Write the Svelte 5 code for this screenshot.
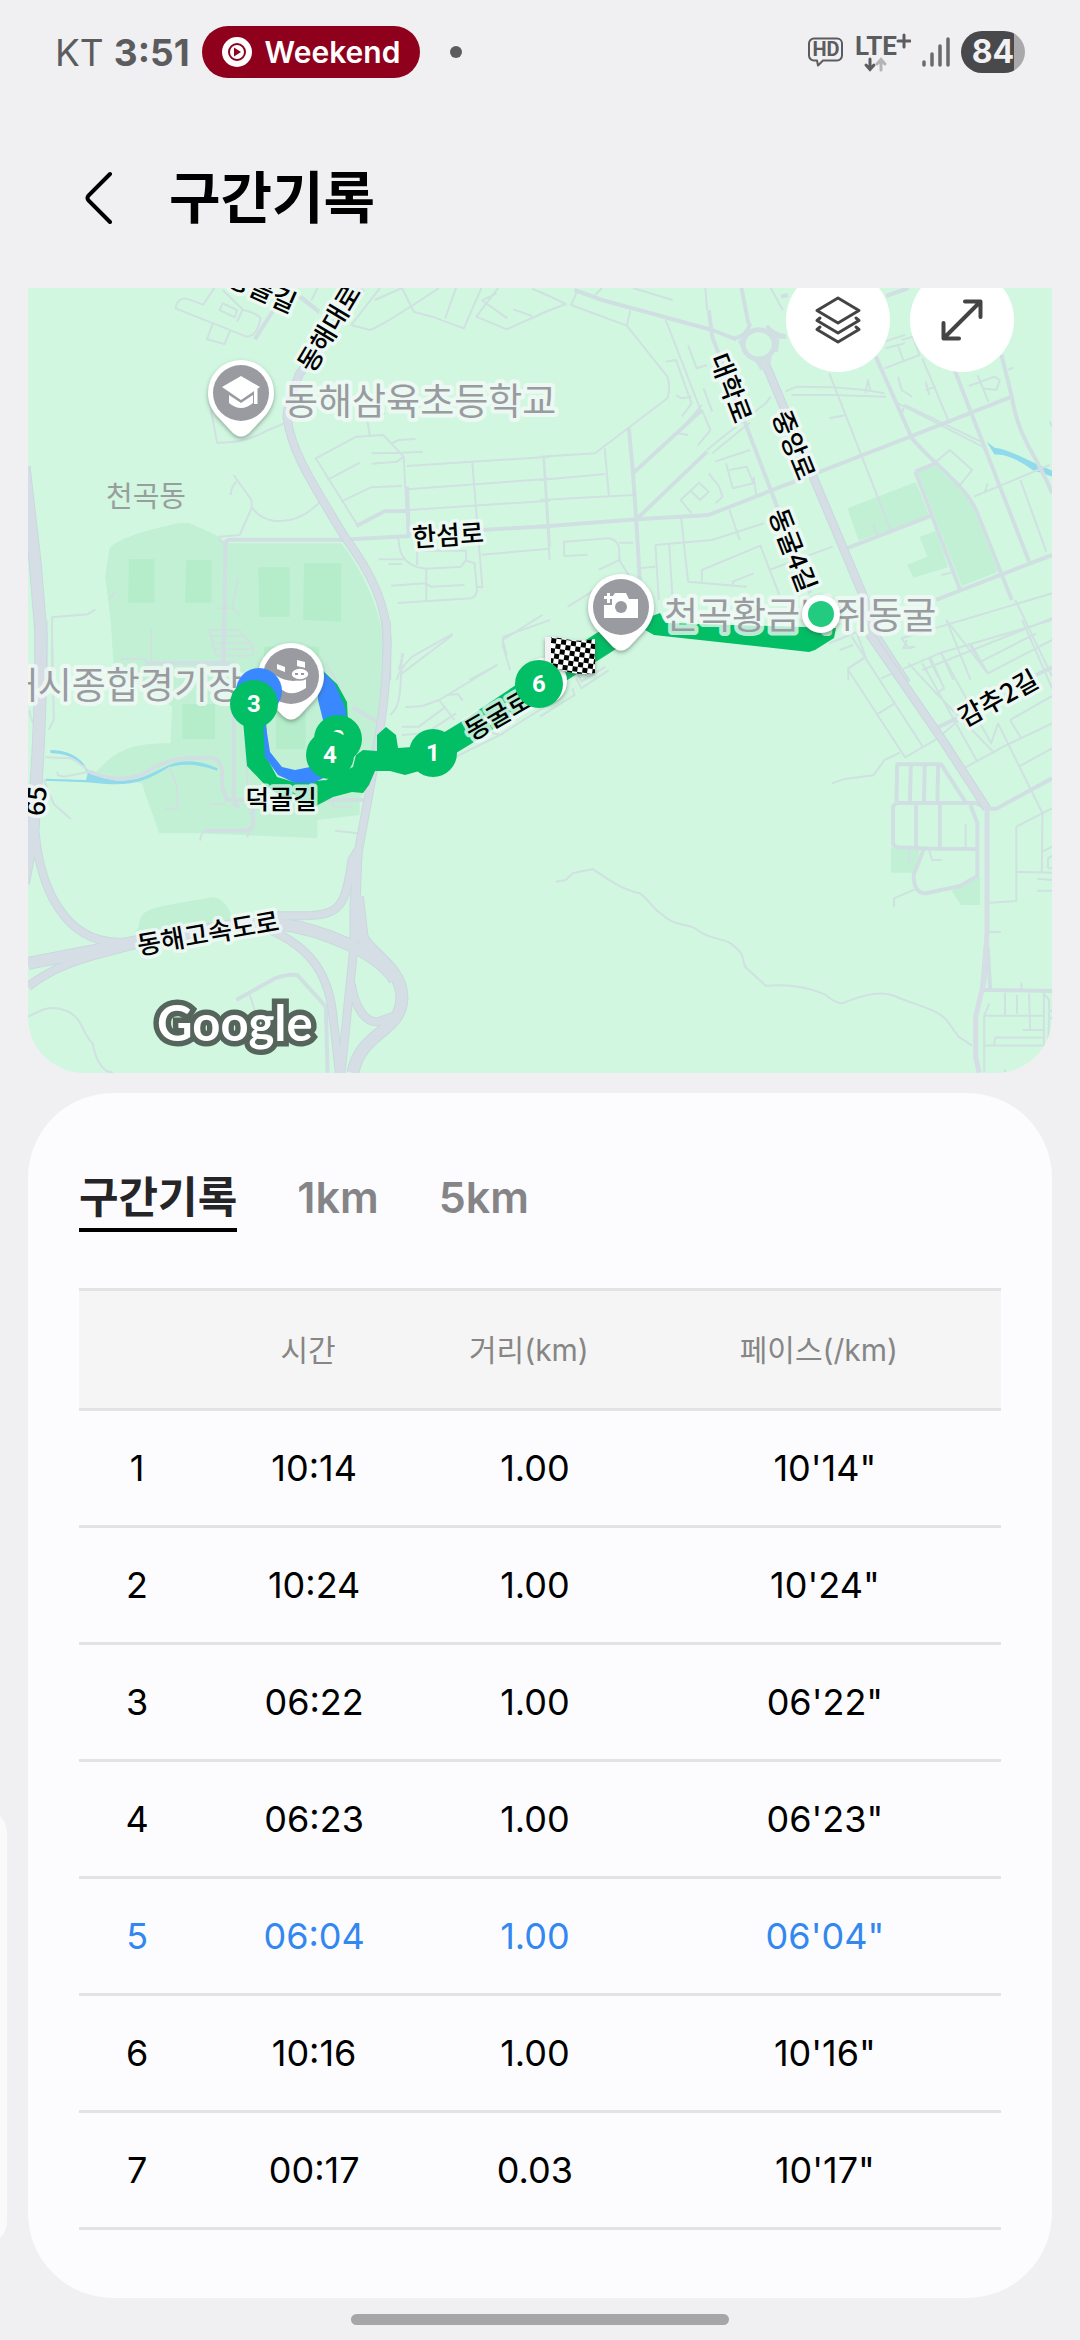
<script lang="ts">
  interface Split {
    no: number;
    time: string;
    distance: string;
    pace: string;
    best?: boolean;
  }

  const splits: Split[] = [
    { no: 1, time: "10:14", distance: "1.00", pace: "10'14\"" },
    { no: 2, time: "10:24", distance: "1.00", pace: "10'24\"" },
    { no: 3, time: "06:22", distance: "1.00", pace: "06'22\"" },
    { no: 4, time: "06:23", distance: "1.00", pace: "06'23\"" },
    { no: 5, time: "06:04", distance: "1.00", pace: "06'04\"", best: true },
    { no: 6, time: "10:16", distance: "1.00", pace: "10'16\"" },
    { no: 7, time: "00:17", distance: "0.03", pace: "10'17\"" },
  ];

  const tabs = ["구간기록", "1km", "5km"];
  let activeTab = $state("구간기록");

  // each tile keeps its own coordinates and is placed by a transform
  const tiles = [
    {
      place: "translate(20 280) scale(0.338 0.3333)",
      parks: [
        "M268 1020 252 890 265 805C290 770 420 740 470 729H500L580 765 612 790H950C985 830 1050 940 1070 1050L1075 1200H280Z",
      ],
      fields: ["M322 838H398V968H320Z", "M492 840H567V968H488Z", "M705 862H798V1010H708Z", "M840 850H950V1025L838 1020Z", "M722 1100H885V1200H722Z"],
      water: [],
      minor: [
        "M575 24 542 74 490 55Q465 55 460 85L670 170Q700 172 712 115 700 98 660 90L600 30",
        "M600 70 642 90 636 112 590 90ZM642 126 660 86M570 132 553 178 605 192 622 152",
        "M790 24 885 100M880 24 862 62M1065 24 980 135 1035 150Q1060 145 1240 24M1050 60 1130 24 1165 95 1225 112 1313 145 1365 24M1290 24 1258 115",
        "M1415 24 1350 110 1440 148 1568 90M1365 60 1442 115M1370 60 1410 40M1460 88 1515 108M1515 26 1568 50",
        "M565 390 583 488C650 488 690 475 735 450L782 430",
        "M632 585 685 660V685L650 765 590 770Q590 790 610 790M624 645Q622 625 640 605M685 680C720 740 820 740 888 665",
        "M1028 425 1035 465M1080 400 1060 408M910 600 1005 548M950 665 1038 622 1130 618",
        "M1000 738 875 535 995 470 1075 465 1135 530 1148 765M1040 520 1130 518 1192 515M1040 551 1115 545 1135 530M1100 490 1120 480 1170 477",
        "M1145 558 1568 530M1145 628 1568 596M1152 690 1568 662M1338 545 1368 922 1350 920M1550 530 1568 800M1365 824 1568 806",
        "M1120 775Q1120 860 1202 866L1305 860 1320 840V812H1175V855M1060 838H1135M1090 852H1130",
        "M1098 917 1200 910 1215 920 1315 915M1202 866V962M1117 969 1335 955Q1350 950 1352 930L1345 850 1320 842",
        "M645 895 628 980M580 985H630L653 1008M95 1190V1012L200 1003 223 988M262 960 282 935M388 1045V1150M298 1137H368L375 1145H600",
        "M560 1050H648L690 1100Q692 1125 680 1127H580ZM562 1068H665M568 1088H685M572 1108H692",
        "M1280 1062 1160 1130Q1120 1170 1115 1200M1135 1120 1120 1170M1412 1155 1330 1200M1546 1005 1428 1080 1440 1125",
      ],
      mid: [
        "M885 95 830 50M750 90 695 178",
        "M602 1200 608 790Q608 779 625 779H950L1155 768",
        "M995 738 1080 693 1145 692M1145 620 1150 768M1365 750 1568 738",
      ],
      major: [
        "M1010 24 825 285Q790 380 790 410C800 500 840 570 960 770 1040 880 1090 980 1085 1100V1200",
      ],
      highway: ["M12 560 45 850 62 1060V1200"],
    },
    {
      place: "translate(540 280) scale(0.3444 0.3333)",
      parks: [
        "M893 685 1090 607 1105 640 1130 708 925 782Z",
        "M1095 572 1145 555C1200 610 1240 640 1260 690L1330 875 1225 918 1180 800Z",
        "M1102 770 1150 752 1185 862 1085 893 1065 855 1125 830Z",
      ],
      fields: [],
      water: ["M1297 485 1320 503C1370 510 1410 540 1487 572V590L1430 570C1390 540 1350 520 1320 524Z"],
      minor: [
        "M0 35 75 72 0 102M110 30 90 75 252 137 370 290Q380 320 370 355L160 520 0 530M252 137 262 92M180 24 160 45M270 24 385 60",
        "M365 120 410 240 470 400M365 245 395 240 440 370 412 410M430 196 455 265 485 255M395 345 410 355 440 350M470 375 400 460 430 465M458 497 495 450 470 390M475 325 500 395",
        "M0 600 190 582M0 660 270 645M10 530 28 840M188 505 200 648M70 828 138 824M70 828V785L200 775Q228 780 230 810V840L260 890M230 788H270M170 870 235 838",
        "M485 510 520 480 655 370 670 350M500 520 600 435 610 428M508 545 610 510M540 550 560 625 620 610 600 560 550 570",
        "M408 660 462 608 490 635 465 660 435 630M408 660 440 700M490 580 520 620 530 650 510 670M620 590 628 645",
        "M410 715 430 905 600 920M335 795 500 780 650 730M335 795 345 960M375 790 385 960M285 865 335 860M470 905V870L640 797 695 945M560 915V905L620 880",
        "M550 690 580 780M665 870 850 800M840 280 1018 750M1050 180 1082 170 1102 225 1000 265M1003 205 1060 190M1040 200 1055 240",
        "M712 335 745 320 850 322 945 330 1000 340M730 345H850L1005 350M945 340 952 300 960 335M1040 290 1050 330 1080 350M840 415 890 405",
        "M1110 235 1185 420M1120 305 1130 345M1120 330 1150 320M1245 318 1320 290 1335 300 1325 330 1285 325M1270 285 1302 365M1360 270 1375 262",
        "M1040 370 1285 500M1050 400 1060 375 1290 490M1150 545 1190 510 1255 570 1220 615M1260 650 1480 555M1395 600 1470 815M1300 610 1290 640M1480 425 1487 440",
        "M1165 885 1195 878M970 730V740L980 765M80 980 160 930",
        "M840 1090 935 1050 920 1060 945 1130 895 1165V1200M870 1110 910 1095M1487 1015 1110 1170M1487 940 1050 1075 1070 1105 1090 1100M1180 1020 1250 1200M1245 1090 1300 1180M1380 960 1487 1190M1130 1135 1155 1190M1165 1120 1200 1200",
        "M105 1170 120 1205 190 1160M480 24 485 90M670 24 705 90M1000 185 1060 165",
      ],
      mid: [
        "M100 30 180 60 500 150 570 178M585 24 605 130M680 170H715M1005 48 1070 24M700 50 720 45",
        "M490 90 500 170 670 630 785 940",
        "M258 445 270 580 280 730 290 905M270 580 470 390M280 718 485 515",
        "M0 740 280 718 490 705 670 632 800 580 1075 470 1370 350",
        "M975 230 1080 475C1160 570 1240 620 1270 700L1370 960M1090 575 1148 550M1090 575 1220 930M1200 260 1420 845M1340 225 1370 350C1390 480 1440 520 1487 640",
        "M890 805 1135 708M1150 960 1487 825",
      ],
      major: ["M650 240 940 950 970 1060 1065 1210"],
      highway: [],
      ring: true,
    },
    {
      place: "translate(20 620) scale(0.338 0.3333)",
      parks: [
        "M270 180H1068L1072 300C1070 400 1045 460 1005 540V585L880 600V655L540 640H412L360 490 225 455C280 400 310 370 445 370L450 260 285 150Z",
        "M352 920C355 860 390 865 570 832 600 833 620 865 625 890L630 915 340 935Z",
      ],
      fields: ["M480 252H577V357H480Z", "M757 240H845V388H757Z", "M722 80H885V200H722Z"],
      water: [
        "M90 390C150 390 190 420 200 455 270 490 330 490 390 460L430 440C480 415 530 420 585 445L583 452C520 430 470 430 435 445 370 485 330 500 230 490L195 487 75 482 76 476 195 480 200 462C180 420 150 402 90 399Z",
      ],
      minor: [
        "M95 50 100 300 85 330M28 270Q30 310 60 330M75 412 150 415Q180 430 205 455L130 470 112 466 110 455M70 478 100 552 150 597",
        "M440 440Q465 490 466 520V565Q450 575 428 563M562 552H610M545 635Q535 640 533 662M660 190 675 560 690 600 672 652",
        "M905 130 945 200 960 240M925 535V560H980M932 632 1000 640M1130 100C1125 200 1130 260 1095 285",
        "M1130 160 1280 45M1130 320H1180L1260 260M1130 345 1200 340 1290 280M1140 262 1190 258 1240 240 1412 135M1240 240 1285 300M1265 225 1295 222 1310 242M1330 320 1420 345 1568 250M1290 410 1430 340",
        "M1568 0 1430 50 1428 75 1450 150M680 1125 697 1180M24 1190C60 1170 90 1155 130 1170 190 1190 180 1240 215 1270 225 1330 250 1358 275 1358",
      ],
      mid: [
        "M205 455C270 480 310 482 360 465 440 410 490 413 560 413 600 415 600 450 598 500L612 540H1020",
        "M602 0V130M632 240V540Q635 560 650 560M690 560V610Q690 632 660 632H545M372 130H640M985 262 1055 305",
        "M640 1140 755 1075Q790 1062 820 1065L905 1160 910 1358",
      ],
      major: [
        "M1083 0 1086 60C1085 250 1060 350 1040 480L1000 700 988 850V980L950 1358",
        "M1000 690 982 720C965 850 950 885 850 887H760M1000 700 995 830",
        "M45 640C60 800 130 965 290 967H340M24 1100C100 1040 160 1020 340 975",
        "M980 1090C990 1160 1020 1210 1060 1205L1100 1190M740 930C850 980 910 1050 925 1180L945 1358",
      ],
      highway: [
        "M62 0C62 250 55 400 45 520L38 640 10 790",
        "M24 1030 230 990 360 962 640 915 770 912C900 930 1060 1000 1110 1080",
        "M998 830 1012 950C1030 1000 1128 1040 1130 1130 1130 1240 1010 1230 985 1358",
      ],
    },
    {
      place: "translate(540 620) scale(0.3444 0.3333)",
      parks: ["M1019 682H1105L1085 758H1019Z", "M1195 812 1278 770V855H1222Z"],
      fields: [],
      water: [],
      minor: [
        "M46 785 75 780 95 760 153 747C200 780 240 810 290 820 320 840 320 860 350 880 390 920 420 910 450 925 490 960 530 955 550 968 610 1010 580 1030 600 1045L655 1097C750 1090 800 1110 830 1125Q870 1160 890 1145C950 1120 1000 1115 1030 1128 1100 1160 1150 1165 1180 1200L1215 1250 1255 1277",
        "M848 490 880 478 968 466 1000 420 1045 398",
        "M1350 1118V1185M1385 1125V1182M1420 1120 1423 1230M1463 1118V1277M1290 1358V1185L1305 1150M1290 1187H1465M1402 1230H1465M1318 1277 1322 1253H1465M1290 1277H1475Q1480 1180 1478 1140L1463 1120M1480 1172H1487M1480 1195H1487M1350 1348V1358M1398 1088V1108",
        "M1305 848 1383 843V620L1487 565M1383 755 1487 758M1457 758 1459 580M1459 695 1487 680M1475 745V715L1487 708M1475 745H1487M1445 776 1487 780M1443 812H1487M1303 936H1338",
        "M1072 690V730M1130 690 1138 720H1166M1088 808 1028 835V862M1236 612V684",
        "M893 147 1060 412 1155 355 1250 270M893 147 945 112M905 50 1110 378M978 283 1030 250M990 175 1160 100 1487 0M1065 60 1055 85 1085 80",
        "M1070 130 1155 225 1320 400M1135 115 1173 205 1148 222M1110 130 1270 425M1230 445 1355 375 1487 310M1365 300 1487 228M1365 300 1397 355M1165 100 1310 370 1330 310 1459 580M1390 440 1487 385M1180 0 1300 160 1487 60M1280 125 1440 40M1250 70 1300 160M1400 0 1487 205M0 290 100 225 95 205M105 175 120 205 200 150",
      ],
      mid: [
        "M1035 545 1037 433H1165L1238 550M1077 433 1074 545M1117 433 1115 545M1156 433 1154 545M1092 550V685M1161 550V685",
        "M1035 549H1265L1300 566M1035 549 1025 560V672L1035 682 1165 687H1272M1113 690 1085 765Q1085 820 1120 820L1220 798 1270 768V610L1250 555",
        "M1300 566H1325L1487 475M1155 322 1210 295M1440 165 1487 142M1297 940 1283 1110H1310L1487 1113M1300 980 1307 1105",
      ],
      major: ["M955 40 1175 370 1298 566"],
      highway: [],
      trunk: "M1298 566V940L1290 1080 1265 1190V1310L1275 1358",
    },
  ];

  const roadLabels = [
    { text: "동골길", x: 262, y: 290, angle: 24 },
    { text: "동해대로", x: 329, y: 328, angle: -59 },
    { text: "한섬로", x: 448, y: 535, angle: -4 },
    { text: "대학로", x: 731, y: 388, angle: 69 },
    { text: "중앙로", x: 794, y: 445, angle: 68 },
    { text: "동굴4길", x: 793, y: 550, angle: 69 },
    { text: "감추2길", x: 998, y: 698, angle: -29 },
    { text: "동굴로", x: 498, y: 715, angle: -30 },
    { text: "덕골길", x: 281, y: 799, angle: 0 },
    { text: "동해고속도로", x: 208, y: 933, angle: -10 },
    { text: "65", x: 36, y: 801, angle: -85 },
  ];

  const kmMarkers = [
    { km: 1, x: 433, y: 753 },
    { km: 2, x: 338, y: 739 },
    { km: 4, x: 330, y: 755 },
    { km: 3, x: 254, y: 704 },
    { km: 6, x: 539, y: 684 },
  ];
</script>

<svelte:head>
  <title>구간기록</title>
</svelte:head>

<div class="screen">
  <div class="status-bar">
    <div class="status-left">
      <span class="carrier">KT</span>
      <span class="clock">3:51</span>
      <span class="now-playing">
        <svg width="30" height="30" viewBox="0 0 30 30" aria-hidden="true">
          <circle cx="15" cy="15" r="15" fill="#fff" />
          <circle cx="15" cy="15" r="8" fill="none" stroke="#8f001c" stroke-width="2" />
          <path d="M12 10.5v9l7-4.500z" fill="#8f001c" />
        </svg>
        Weekend
      </span>
      <span class="more-dot"></span>
    </div>
    <div class="status-right">
      <svg width="36" height="30" viewBox="0 0 36 30" aria-hidden="true">
        <path
          d="M6 1.500h23a5 5 0 0 1 5 5v12a5 5 0 0 1-5 5H15l-5 5-1-5H6a5 5 0 0 1-5-5v-12a5 5 0 0 1 5-5z"
          fill="none"
          stroke="#5c5c5e"
          stroke-width="2"
          stroke-linejoin="round"
        />
        <text class="hd" x="18" y="19">HD</text>
      </svg>
      <svg width="56" height="40" viewBox="0 0 56 40" aria-hidden="true">
        <text class="lte" x="0" y="23">LTE</text>
        <path d="M49 3v12M43 9h12" stroke="#5c5c5e" stroke-width="3" stroke-linecap="round" />
        <path d="M15 27v10m-4-4 4 4.500 4-4.500" fill="none" stroke="#5c5c5e" stroke-width="3" stroke-linecap="round" />
        <path d="M26 38V28m-4 4 4-4.500 4 4.500" fill="none" stroke="#b4b4b6" stroke-width="3" stroke-linecap="round" />
      </svg>
      <svg width="28" height="30" viewBox="0 0 28 30" aria-hidden="true">
        <path d="M2 25v3M10 17v11M18 9v19M26 2v26" stroke="#6b6b6d" stroke-width="3.500" stroke-linecap="round" />
      </svg>
      <span class="battery">84</span>
    </div>
  </div>

  <header class="app-bar">
    <button class="back-button" aria-label="뒤로">
      <svg width="28" height="54" viewBox="0 0 28 54" aria-hidden="true">
        <path
          d="M25 3 3.500 24.500q-2 2.500 0 5L25 51"
          fill="none"
          stroke="#000"
          stroke-width="4"
          stroke-linecap="round"
        />
      </svg>
    </button>
    <h1>구간기록</h1>
  </header>

  <main>
    <section class="map" aria-label="지도">
      <svg class="map-canvas" viewBox="28 288 1024 785" aria-hidden="true">
        <defs>
          <pattern id="checker" width="10" height="10" patternUnits="userSpaceOnUse" patternTransform="rotate(8)">
            <rect width="10" height="10" fill="#fff" />
            <path d="M0 0h5v5H0zM5 5h5v5H5z" fill="#000" />
          </pattern>
          <filter id="shadow" x="-30%" y="-30%" width="160%" height="160%">
            <feDropShadow dx="0" dy="2" stdDeviation="2" flood-color="#3c5046" flood-opacity="0.5" />
          </filter>
          <g id="pin" filter="url(#shadow)">
            <path
              d="M0-33A33 33 0 0 1 33 0C33 10 28 19 22 25L8 40Q0 47-8 40L-22 25C-28 19-33 10-33 0A33 33 0 0 1 0-33Z"
              fill="#fff"
            />
            <circle r="28" fill="#999ba0" />
          </g>
        </defs>

        {#each tiles as tile}
          <g transform={tile.place}>
            {#each tile.parks as d}<path class="park" {d} />{/each}
            {#each tile.fields as d}<path class="field" {d} />{/each}
          </g>
        {/each}

        {#each tiles as tile}
          <g transform={tile.place}>
            {#each tile.water as d}<path class="water" {d} />{/each}
            {#each tile.minor as d}<path class="road minor" {d} />{/each}
            {#each tile.mid as d}<path class="road mid" {d} />{/each}
            {#each tile.highway as d}<path class="road highway casing" {d} />{/each}
            {#each tile.major as d}<path class="road major casing" {d} />{/each}
            {#each tile.highway as d}<path class="road highway" {d} />{/each}
            {#each tile.major as d}<path class="road major" {d} />{/each}
            {#if tile.trunk}<path class="road trunk" d={tile.trunk} />{/if}
            {#if tile.ring}
              <path class="road mid" d="M565 175Q600 170 610 130M658 138Q680 165 712 168M580 180Q590 200 595 215M690 178 685 215M610 225Q640 250 645 270M668 225 660 270" />
              <ellipse class="roundabout" cx="635" cy="193" rx="45" ry="44" />
            {/if}
          </g>
        {/each}

        <g class="route">
          <path class="walk" d="M652 616 660 613 666 623 836 628 834 638 815 650 809 652 654 635 645 630Z" />
          <path class="walk-line" d="M433 753 466 733 539 684 622 631" />
          <path
            class="walk"
            d="M412 747 398 748 396 735 386 727 377 735V751L363 750 356 755 353 767 320 783 313 787 316 806 333 797 352 792 363 793 369 785 375 771 390 771 405 775 430 768Z"
          />
          <path class="walk" d="M243 720 247 766 267 787 287 800 317 806 325 780 297 783 277 777 268 760 266 720Z" />
          <path class="walk" d="M322 670 337 684 347 702 348 722 340 725Z" />
          <path class="fast" d="M265 720 270 752 282 767 295 770 310 767 330 775 313 783 295 783 278 775 265 757 263 720Z" />
          <path class="fast" d="M325 673 335 684 345 707 347 725 325 728 318 700 317 680Z" />
        </g>

        {#each roadLabels as label}
          <text class="road-label" dy="0.37em" transform="translate({label.x} {label.y}) rotate({label.angle})">
            {label.text}
          </text>
        {/each}
        <text class="area-label" x="146" y="496" dy="0.37em">천곡동</text>
        <text class="poi-label" x="284" y="401" dy="0.37em">동해삼육초등학교</text>
        <text class="poi-label" x="664" y="615" dy="0.37em">천곡황금박쥐동굴</text>
        <text class="poi-label end" x="242" y="685" dy="0.37em">동해시종합경기장</text>

        <g transform="translate(241 393)">
          <use href="#pin" />
          <path d="M-19-6 0-17 19-6 0 7Z" fill="#fff" />
          <path d="M-12 2 0 10 12 2v8Q0 20-12 10ZM13-5h3.500v16H13Z" fill="#fff" />
        </g>
        <g transform="translate(621 607)">
          <use href="#pin" />
          <path d="M-17-2h8v-8l3-4H5l3 6h9v19h-34ZM-14-14h3v3h3v3h-3v4h-3v-4h-3v-3h3Z" fill="#fff" />
          <circle cx="0" cy="0" r="6" fill="#999ba0" />
        </g>
        <g transform="translate(291 676)">
          <use href="#pin" />
          <path d="M-14-12 -6-9V-4L-14-7ZM6-16 14-14V-8L6-10ZM-16-1Q0 9 15 2V12Q0 22-10 13Q-16 6-16-1Z" fill="#fff" />
          <ellipse cx="9" cy="-2" rx="9" ry="6" fill="#fff" stroke="#999ba0" stroke-width="1.500" />
          <path d="M4-2h3M10-2h3" stroke="#999ba0" stroke-width="2" />
        </g>

        <circle cx="259" cy="691" r="23" fill="#3a88ff" />
        <circle cx="544" cy="681" r="23" fill="#fff" filter="url(#shadow)" />
        <g filter="url(#shadow)">
          <path d="M545 637h6v36h-6z" fill="#f2f2f4" />
          <path d="M551 637q10 1 20 3t24-1v34q-10 2-22 0t-22-8z" fill="url(#checker)" />
        </g>
        <circle cx="821" cy="614" r="19" fill="#fff" filter="url(#shadow)" />
        <circle cx="821" cy="614" r="13" fill="#22cb7f" />

        {#each kmMarkers as marker}
          <circle cx={marker.x} cy={marker.y} r="24" fill="#02be64" />
          <text class="km-label" x={marker.x} y={marker.y} dy="0.35em">{marker.km}</text>
        {/each}

        <text class="google" x="157" y="1041">Google</text>
      </svg>

      <div class="map-actions">
        <button class="map-button" aria-label="지도 유형">
          <svg width="48" height="50" viewBox="0 0 48 50" aria-hidden="true">
            <path
              d="M24 3 45 15.500 24 28 3 15.500ZM6 23 3 25.500 24 38 45 25.500 42 23M6 32 3 34.500 24 47 45 34.500 42 32"
              fill="none"
              stroke="#444446"
              stroke-width="3"
              stroke-linejoin="round"
              stroke-linecap="round"
            />
          </svg>
        </button>
        <button class="map-button" aria-label="확대">
          <svg width="44" height="44" viewBox="0 0 44 44" aria-hidden="true">
            <path
              d="M4 40 40 4M25 3.500h15.500V19M3.500 25v15.500H19"
              fill="none"
              stroke="#444446"
              stroke-width="4"
              stroke-linejoin="round"
              stroke-linecap="round"
            />
          </svg>
        </button>
      </div>
    </section>

    <section class="records">
      <div class="tabs" role="tablist">
        {#each tabs as tab}
          <button
            class="tab"
            class:active={activeTab === tab}
            role="tab"
            aria-selected={activeTab === tab}
            onclick={() => (activeTab = tab)}
          >
            {tab}
          </button>
        {/each}
      </div>

      <table>
        <colgroup>
          <col class="col-no" />
          <col class="col-time" />
          <col class="col-distance" />
          <col class="col-pace" />
        </colgroup>
        <thead>
          <tr>
            <th></th>
            <th>시간</th>
            <th>거리(km)</th>
            <th>페이스(/km)</th>
          </tr>
        </thead>
        <tbody>
          {#each splits as split}
            <tr class:best={split.best}>
              <td class="no">{split.no}</td>
              <td>{split.time}</td>
              <td>{split.distance}</td>
              <td>{split.pace}</td>
            </tr>
          {/each}
        </tbody>
      </table>
    </section>
  </main>

  <div class="edge-handle"></div>
  <div class="home-indicator"></div>
</div>

<style>
  :global(body) {
    background: #f0f0f3;
  }

  .screen {
    position: relative;
    box-sizing: border-box;
    min-height: 100vh;
    overflow: hidden;
    font-family: Inter, "Noto Sans CJK KR", sans-serif;
    color: #000;
  }

  button {
    padding: 0;
    border: none;
    background: none;
    font: inherit;
    color: inherit;
    cursor: pointer;
  }

  .status-bar {
    display: flex;
    justify-content: space-between;
    align-items: center;
    height: 104px;
    padding: 0 55px;
    color: #5c5c5e;
  }

  .status-left,
  .status-right {
    display: flex;
    align-items: center;
  }

  .status-right {
    gap: 11px;
  }

  .carrier {
    font-size: 37px;
  }

  .clock {
    margin-left: 10px;
    font-size: 37px;
    font-weight: 700;
  }

  .now-playing {
    display: flex;
    align-items: center;
    gap: 13px;
    height: 52px;
    margin-left: 12px;
    padding: 0 20px;
    border-radius: 26px;
    background: #8f001c;
    color: #fff;
    font-size: 30px;
    font-weight: 600;
  }

  .more-dot {
    width: 12px;
    height: 12px;
    margin-left: 30px;
    border-radius: 50%;
    background: #5c5c5e;
  }

  .hd {
    font: 700 20px Roboto, sans-serif;
    text-anchor: middle;
    fill: #5c5c5e;
  }

  .lte {
    font: 700 26px Roboto, sans-serif;
    fill: #5c5c5e;
  }

  .battery {
    width: 64px;
    height: 42px;
    border-radius: 21px;
    background: linear-gradient(to right, #49494b 53px, #a9a9ab 53px);
    color: #f2f2f4;
    font-size: 32px;
    font-weight: 700;
    line-height: 42px;
    text-align: center;
  }

  .app-bar {
    display: flex;
    align-items: center;
    gap: 56px;
    box-sizing: border-box;
    height: 184px;
    padding: 4px 85px 0;
  }

  .back-button {
    display: flex;
  }

  h1 {
    margin: 0;
    font-size: 56px;
    font-weight: 700;
    line-height: 80px;
  }

  main {
    display: flex;
    flex-direction: column;
    gap: 20px;
    padding: 0 28px;
  }

  .map {
    position: relative;
    overflow: hidden;
    border-radius: 0 0 56px 56px;
    background: #d2f7e1;
  }

  .map-canvas {
    display: block;
    width: 100%;
  }

  .park {
    fill: #c2f0d4;
  }

  .field {
    fill: #b5edca;
  }

  .water {
    fill: #90daeb;
  }

  .road {
    fill: none;
    stroke: #d5dee5;
    stroke-linejoin: round;
    vector-effect: non-scaling-stroke;
  }

  .minor {
    stroke: #cfe1e0;
    stroke-width: 2px;
  }

  .mid {
    stroke: #d0dfe2;
    stroke-width: 4px;
  }

  .trunk {
    stroke-width: 5px;
  }

  .major {
    stroke-width: 7px;
  }

  .highway {
    stroke-width: 11px;
  }

  .casing {
    stroke: #cad8de;
  }

  .major.casing {
    stroke-width: 9px;
  }

  .highway.casing {
    stroke-width: 13px;
  }

  .roundabout {
    fill: #d2f7e1;
    stroke: #d0dfe2;
    stroke-width: 5px;
    vector-effect: non-scaling-stroke;
  }

  .walk {
    fill: #02be64;
  }

  .walk-line {
    fill: none;
    stroke: #02be64;
    stroke-width: 24px;
  }

  .fast {
    fill: #3a88ff;
  }

  .road-label,
  .area-label,
  .poi-label {
    font-family: "Noto Sans CJK KR", sans-serif;
    paint-order: stroke;
    stroke: rgba(244, 250, 248, 0.75);
    stroke-linejoin: round;
  }

  .road-label {
    font-size: 26px;
    font-weight: 500;
    text-anchor: middle;
    fill: #000;
    stroke-width: 7px;
  }

  .area-label {
    font-size: 29px;
    text-anchor: middle;
    fill: #989e9e;
    stroke-width: 0;
  }

  .poi-label {
    font-size: 37px;
    fill: #999ba0;
    stroke-width: 8px;
  }

  .poi-label.end {
    text-anchor: end;
  }

  .km-label {
    font: 700 24px Roboto, sans-serif;
    text-anchor: middle;
    fill: #fff;
  }

  .google {
    font: 700 49px Lato, sans-serif;
    fill: #fff;
    stroke: #56655c;
    stroke-width: 11px;
    paint-order: stroke;
  }

  .map-actions {
    position: absolute;
    top: -20px;
    right: 38px;
    display: flex;
    gap: 20px;
  }

  .map-button {
    display: flex;
    justify-content: center;
    align-items: center;
    width: 104px;
    height: 104px;
    border-radius: 50%;
    background: #fff;
  }

  .records {
    padding: 74px 51px 68px;
    border-radius: 85px;
    background: #fcfcff;
  }

  .tabs {
    display: flex;
    gap: 60px;
  }

  .tab {
    padding-bottom: 1px;
    border-bottom: 4px solid transparent;
    color: #858587;
    font-size: 43px;
    font-weight: 600;
    line-height: 60px;
  }

  .tab.active {
    border-color: #000;
    color: #252528;
  }

  table {
    width: 100%;
    margin-top: 56px;
    border-collapse: separate;
    border-spacing: 0;
    table-layout: fixed;
    border-top: 3px solid #e3e3e3;
  }

  .col-no {
    width: 12.6%;
  }

  .col-time {
    width: 24.5%;
  }

  .col-distance {
    width: 23.4%;
  }

  th,
  td {
    box-sizing: border-box;
    padding: 0;
    border-bottom: 3px solid #e3e3e3;
    text-align: center;
  }

  th {
    height: 120px;
    padding-bottom: 4px;
    background: #f5f5f5;
    color: #868686;
    font-size: 30px;
    font-weight: 400;
  }

  td {
    height: 117px;
    padding-left: 12px;
    font-size: 36px;
  }

  td.no {
    padding-left: 0;
  }

  .best {
    color: #3388ef;
  }

  .edge-handle {
    position: absolute;
    left: -20px;
    bottom: 95px;
    width: 27px;
    height: 436px;
    border-radius: 0 24px 24px 0;
    background: #fafafa;
  }

  .home-indicator {
    width: 35%;
    height: 11px;
    margin: 16px auto 15px;
    border-radius: 6px;
    background: #a6a6a8;
  }
</style>
